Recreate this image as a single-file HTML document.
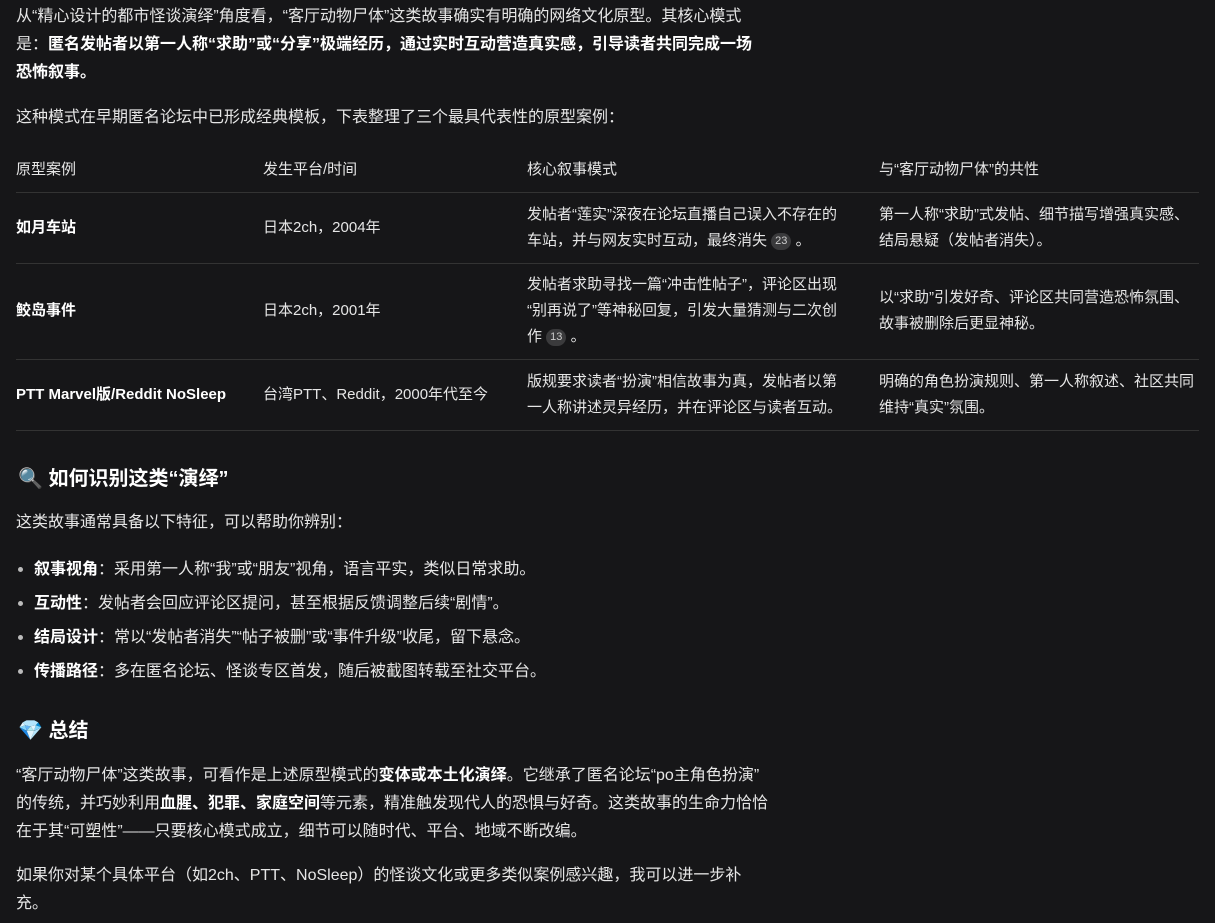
<!DOCTYPE html>
<html><head><meta charset="utf-8"><style>
body{margin:0;background:#161618;color:#e6e6e6;font-family:"Liberation Sans","Noto Sans CJK SC",sans-serif;font-size:16px;}
p{margin:0;line-height:28px;white-space:nowrap;}
b{color:#fff;font-weight:bold;}
.t{position:absolute;left:16px;width:1183px;font-size:15px;}
.row{position:absolute;left:0;width:1183px;border-bottom:1px solid #333;}
.c{position:absolute;line-height:26px;white-space:nowrap;}
.c1{left:0}.c2{left:247px}.c3{left:511px}.c4{left:863px}
.bd{display:inline-block;background:#3a3a3c;color:#ccc;font-size:11px;border-radius:9px;padding:0 4px;line-height:17px;height:17px;vertical-align:1px;}
h3{position:absolute;left:18px;margin:0;font-size:20px;color:#fff;}
li{position:absolute;left:34px;white-space:nowrap;}
li:before{content:"";position:absolute;left:-16px;top:12px;width:5px;height:5px;border-radius:50%;background:#bbb;}
.a{position:absolute;left:16px;}
</style></head><body>
<div class="a" style="top:3px"><p>从“精心设计的都市怪谈演绎”角度看，“客厅动物尸体”这类故事确实有明确的网络文化原型。其核心模式<br>是：<b>匿名发帖者以第一人称“求助”或“分享”极端经历，通过实时互动营造真实感，引导读者共同完成一场<br>恐怖叙事。</b></p></div>
<div class="a" style="top:104px"><p>这种模式在早期匿名论坛中已形成经典模板，下表整理了三个最具代表性的原型案例：</p></div>
<div class="t" style="top:0">
<div class="row" style="top:148px;height:44px"><div class="c c1" style="top:9px">原型案例</div><div class="c c2" style="top:9px">发生平台/时间</div><div class="c c3" style="top:9px">核心叙事模式</div><div class="c c4" style="top:9px">与“客厅动物尸体”的共性</div></div>
<div class="row" style="top:193px;height:70px"><div class="c c1" style="top:22px"><b>如月车站</b></div><div class="c c2" style="top:22px">日本2ch，2004年</div><div class="c c3" style="top:9px">发帖者“莲实”深夜在论坛直播自己误入不存在的<br>车站，并与网友实时互动，最终消失 <span class="bd">23</span> 。</div><div class="c c4" style="top:9px">第一人称“求助”式发帖、细节描写增强真实感、<br>结局悬疑（发帖者消失）。</div></div>
<div class="row" style="top:264px;height:95px"><div class="c c1" style="top:34px"><b>鲛岛事件</b></div><div class="c c2" style="top:34px">日本2ch，2001年</div><div class="c c3" style="top:8px">发帖者求助寻找一篇“冲击性帖子”，评论区出现<br>“别再说了”等神秘回复，引发大量猜测与二次创<br>作 <span class="bd">13</span> 。</div><div class="c c4" style="top:21px">以“求助”引发好奇、评论区共同营造恐怖氛围、<br>故事被删除后更显神秘。</div></div>
<div class="row" style="top:360px;height:70px"><div class="c c1" style="top:22px"><b>PTT Marvel版/Reddit NoSleep</b></div><div class="c c2" style="top:22px">台湾PTT、Reddit，2000年代至今</div><div class="c c3" style="top:9px">版规要求读者“扮演”相信故事为真，发帖者以第<br>一人称讲述灵异经历，并在评论区与读者互动。</div><div class="c c4" style="top:9px">明确的角色扮演规则、第一人称叙述、社区共同<br>维持“真实”氛围。</div></div>
</div>
<h3 style="top:462px">🔍 如何识别这类“演绎”</h3>
<div class="a" style="top:509px"><p>这类故事通常具备以下特征，可以帮助你辨别：</p></div>
<ul style="margin:0;padding:0;list-style:none">
<li style="top:555px"><b>叙事视角</b>：采用第一人称“我”或“朋友”视角，语言平实，类似日常求助。</li>
<li style="top:589px"><b>互动性</b>：发帖者会回应评论区提问，甚至根据反馈调整后续“剧情”。</li>
<li style="top:623px"><b>结局设计</b>：常以“发帖者消失”“帖子被删”或“事件升级”收尾，留下悬念。</li>
<li style="top:657px"><b>传播路径</b>：多在匿名论坛、怪谈专区首发，随后被截图转载至社交平台。</li>
</ul>
<h3 style="top:714px">💎 总结</h3>
<div class="a" style="top:762px"><p>“客厅动物尸体”这类故事，可看作是上述原型模式的<b>变体或本土化演绎</b>。它继承了匿名论坛“po主角色扮演”<br>的传统，并巧妙利用<b>血腥、犯罪、家庭空间</b>等元素，精准触发现代人的恐惧与好奇。这类故事的生命力恰恰<br>在于其“可塑性”——只要核心模式成立，细节可以随时代、平台、地域不断改编。</p></div>
<div class="a" style="top:862px"><p>如果你对某个具体平台（如2ch、PTT、NoSleep）的怪谈文化或更多类似案例感兴趣，我可以进一步补<br>充。</p></div>
</body></html>
